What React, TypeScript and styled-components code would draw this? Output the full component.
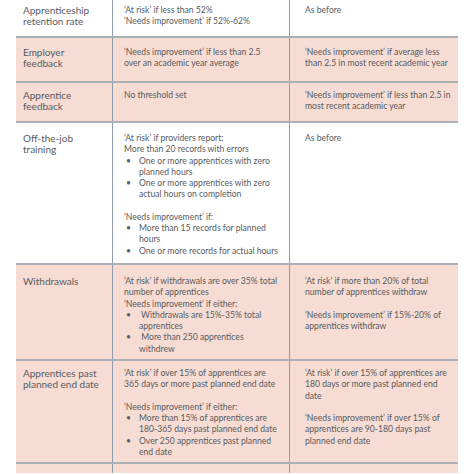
import styled, { createGlobalStyle } from 'styled-components';

const PINK = '#f6dcd3';
const RULE = '#aab0b8';
const DIVIDER = '#8e9dad';
const INK = '#575b5f';

const GlobalStyle = createGlobalStyle`
  html, body {
    margin: 0;
    padding: 0;
    background: #ffffff;
  }
  body {
    font-family: Lato, 'Open Sans', sans-serif;
    color: ${INK};
  }
`;

const Page = styled.div`
  width: 474px;
  height: 474px;
  overflow: hidden;
  background: #ffffff;
`;

const Table = styled.div`
  margin-left: 16px;
  width: 442px;
  display: flex;
  flex-direction: column;
`;

const Row = styled.div<{ $h: number; $pad: number; $pink?: boolean; $open?: boolean }>`
  display: grid;
  grid-template-columns: 96px 177px 169px;
  box-sizing: border-box;
  height: ${(p) => p.$h}px;
  background: ${(p) => (p.$pink ? PINK : '#ffffff')};
  border-bottom: ${(p) => (p.$open ? 'none' : `2px solid ${RULE}`)};

  > * {
    padding-top: ${(p) => p.$pad}px;
  }
`;

const Label = styled.div`
  padding-left: 7px;
  padding-right: 6px;
  font-size: 10px;
  line-height: 11.25px;
`;

const Criteria = styled.div`
  border-left: 1px solid ${DIVIDER};
  padding-left: 11px;
  font-size: 8.6px;
  line-height: 11.25px;
  white-space: nowrap;
  overflow: hidden;
`;

const Note = styled(Criteria)`
  padding-left: 15px;
`;

const Para = styled.p<{ $gap?: boolean }>`
  margin: ${(p) => (p.$gap ? '11.25px' : '0')} 0 0;
`;

const Bullets = styled.ul`
  list-style: none;
  margin: 0;
  padding: 0;
`;

const Item = styled.li`
  display: flex;
`;

const Dot = styled.span`
  flex: 0 0 15px;
  box-sizing: border-box;
  padding-left: 2px;
`;

const Bullet = ({ children }: { children: React.ReactNode }) => (
  <Item>
    <Dot>•</Dot>
    <span>{children}</span>
  </Item>
);

export default function App() {
  return (
    <Page>
      <GlobalStyle />
      <Table>
        <Row $h={38} $pad={5}>
          <Label>Apprenticeship retention rate</Label>
          <Criteria>
            ‘At risk’ if less than 52%
            <br />
            ‘Needs improvement’ if 52%-62%
          </Criteria>
          <Note>As before</Note>
        </Row>

        <Row $h={45} $pad={9} $pink>
          <Label>Employer feedback</Label>
          <Criteria>
            ‘Needs improvement’ if less than 2.5
            <br />
            over an academic year average
          </Criteria>
          <Note>
            ‘Needs improvement’ if average less
            <br />
            than 2.5 in most recent academic year
          </Note>
        </Row>

        <Row $h={40} $pad={7} $pink>
          <Label>Apprentice feedback</Label>
          <Criteria>No threshold set</Criteria>
          <Note>
            ‘Needs improvement’ if less than 2.5 in
            <br />
            most recent academic year
          </Note>
        </Row>

        <Row $h={142} $pad={10}>
          <Label>Off-the-job training</Label>
          <Criteria>
            <Para>
              ‘At risk’ if providers report:
              <br />
              More than 20 records with errors
            </Para>
            <Bullets>
              <Bullet>
                One or more apprentices with zero
                <br />
                planned hours
              </Bullet>
              <Bullet>
                One or more apprentices with zero
                <br />
                actual hours on completion
              </Bullet>
            </Bullets>
            <Para $gap>‘Needs improvement’ if:</Para>
            <Bullets>
              <Bullet>
                More than 15 records for planned
                <br />
                hours
              </Bullet>
              <Bullet>One or more records for actual hours</Bullet>
            </Bullets>
          </Criteria>
          <Note>As before</Note>
        </Row>

        <Row $h={96} $pad={11} $pink>
          <Label>Withdrawals</Label>
          <Criteria>
            <Para>
              ‘At risk’ if withdrawals are over 35% total
              <br />
              number of apprentices
              <br />
              ‘Needs improvement’ if either:
            </Para>
            <Bullets>
              <Bullet>
                &nbsp;Withdrawals are 15%-35% total
                <br />
                apprentices
              </Bullet>
              <Bullet>
                &nbsp;More than 250 apprentices
                <br />
                withdrew
              </Bullet>
            </Bullets>
          </Criteria>
          <Note>
            <Para>
              ‘At risk’ if more than 20% of total
              <br />
              number of apprentices withdraw
            </Para>
            <Para $gap>
              ‘Needs improvement’ if 15%-20% of
              <br />
              apprentices withdraw
            </Para>
          </Note>
        </Row>

        <Row $h={103} $pad={7} $pink>
          <Label>Apprentices past planned end date</Label>
          <Criteria>
            <Para>
              ‘At risk’ if over 15% of apprentices are
              <br />
              365 days or more past planned end date
            </Para>
            <Para $gap>‘Needs improvement’ if either:</Para>
            <Bullets>
              <Bullet>
                More than 15% of apprentices are
                <br />
                180-365 days past planned end date
              </Bullet>
              <Bullet>
                Over 250 apprentices past planned
                <br />
                end date
              </Bullet>
            </Bullets>
          </Criteria>
          <Note>
            <Para>
              ‘At risk’ if over 15% of apprentices are
              <br />
              180 days or more past planned end
              <br />
              date
            </Para>
            <Para $gap>
              ‘Needs improvement’ if over 15% of
              <br />
              apprentices are 90-180 days past
              <br />
              planned end date
            </Para>
          </Note>
        </Row>

        <Row $h={9} $pad={0} $pink $open>
          <Label />
          <Criteria />
          <Note />
        </Row>
      </Table>
    </Page>
  );
}
